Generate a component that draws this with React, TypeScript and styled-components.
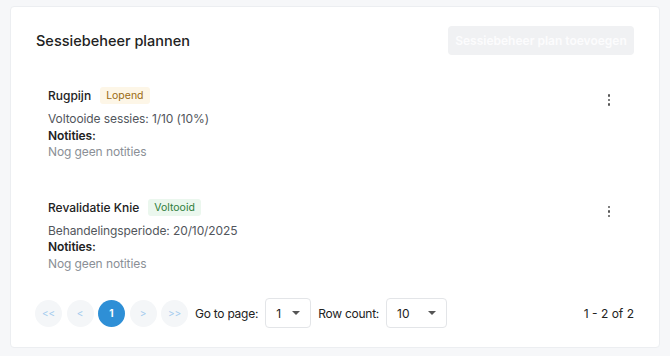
import styled, { createGlobalStyle } from "styled-components"

const GlobalStyle = createGlobalStyle`
  html, body {
    margin: 0;
    padding: 0;
    background: #f6f7f9;
    font-family: "Inter", "Noto Sans", sans-serif;
    color: #2b2b2b;
  }
`

type Plan = {
  title: string
  status: "Lopend" | "Voltooid"
  detail: string
}

const plans: Plan[] = [
  { title: "Rugpijn", status: "Lopend", detail: "Voltooide sessies: 1/10 (10%)" },
  { title: "Revalidatie Knie", status: "Voltooid", detail: "Behandelingsperiode: 20/10/2025" },
]

const Page = styled.div`
  padding: 6px 10px 8px 10px;
`

const Card = styled.div`
  background: #fff;
  border: 1px solid #eceef1;
  border-radius: 4px;
  padding: 18px 25px 20px 25px;
  height: 342px;
  box-sizing: border-box;
`

const Header = styled.div`
  display: flex;
  align-items: center;
  justify-content: space-between;
`

const Title = styled.h2`
  margin: 0;
  font-size: 14.5px;
  font-weight: 500;
  color: #222;
`

const AddButton = styled.button`
  width: 186px;
  height: 29px;
  margin-top: 1px;
  border: none;
  border-radius: 4px;
  background: #f0f1f3;
  color: #fcfcfd;
  font-family: "Inter", sans-serif;
  font-size: 12px;
  font-weight: 600;
`

const List = styled.div`
  display: flex;
  flex-direction: column;
  gap: 38px;
  margin-top: 32px;
  padding: 0 0 0 12px;
`

const Item = styled.div`
  display: flex;
  justify-content: space-between;
  align-items: flex-start;
`

const ItemBody = styled.div`
  display: flex;
  flex-direction: column;
`

const ItemHead = styled.div`
  display: flex;
  align-items: center;
  gap: 9px;
  margin-bottom: 7px;
`

const ItemTitle = styled.span`
  font-size: 12px;
  font-weight: 500;
  color: #222;
`

const Badge = styled.span<{ $tone: "warn" | "ok" }>`
  font-size: 10.5px;
  padding: 2px 6px;
  border-radius: 3px;
  background: ${(p) => (p.$tone === "warn" ? "#fdf6e7" : "#ebf7ee")};
  color: ${(p) => (p.$tone === "warn" ? "#9a6a12" : "#2e7d3a")};
`

const Line = styled.div<{ $kind?: "label" | "muted" }>`
  font-size: 12px;
  line-height: 16.5px;
  letter-spacing: -0.1px;
  color: ${(p) => (p.$kind === "label" ? "#222" : p.$kind === "muted" ? "#8a8f96" : "#52565c")};
  font-weight: ${(p) => (p.$kind === "label" ? 600 : 400)};
`

const Kebab = styled.div`
  display: flex;
  flex-direction: column;
  gap: 2px;
  margin: 7px 24px 0 0;
  span {
    width: 2.5px;
    height: 2.5px;
    border-radius: 50%;
    background: #555;
  }
`

const Pager = styled.div`
  display: flex;
  align-items: center;
  margin-top: 26px;
  margin-left: -1px;
  gap: 7px;
`

const PageNav = styled.div`
  display: flex;
  gap: 4.5px;
`

const PageButton = styled.button<{ $active?: boolean }>`
  width: 27px;
  height: 27px;
  border-radius: 50%;
  border: none;
  padding: 0;
  font-family: "Inter", sans-serif;
  font-size: 10px;
  font-weight: ${(p) => (p.$active ? 700 : 400)};
  background: ${(p) => (p.$active ? "#2e8fd6" : "#f4f6f8")};
  color: ${(p) => (p.$active ? "#fff" : "#a3cbee")};
`

const PagerLabel = styled.span`
  font-size: 12px;
  letter-spacing: -0.25px;
  color: #222;
`

const Select = styled.div<{ $w: number }>`
  width: ${(p) => p.$w}px;
  height: 30px;
  box-sizing: border-box;
  border: 1px solid #e3e5e8;
  border-radius: 4px;
  display: flex;
  align-items: center;
  justify-content: space-between;
  padding: 0 10px 0 10px;
  font-size: 12px;
  color: #222;
  &::after {
    content: "";
    border-left: 4px solid transparent;
    border-right: 4px solid transparent;
    border-top: 4px solid #555;
  }
`

const Range = styled.span`
  margin-left: auto;
  font-size: 12px;
  color: #222;
`

export default function App() {
  return (
    <Page>
      <GlobalStyle />
      <Card>
        <Header>
          <Title>Sessiebeheer plannen</Title>
          <AddButton>Sessiebeheer plan toevoegen</AddButton>
        </Header>
        <List>
          {plans.map((plan) => (
            <Item key={plan.title}>
              <ItemBody>
                <ItemHead>
                  <ItemTitle>{plan.title}</ItemTitle>
                  <Badge $tone={plan.status === "Lopend" ? "warn" : "ok"}>{plan.status}</Badge>
                </ItemHead>
                <Line>{plan.detail}</Line>
                <Line $kind="label">Notities:</Line>
                <Line $kind="muted">Nog geen notities</Line>
              </ItemBody>
              <Kebab>
                <span />
                <span />
                <span />
              </Kebab>
            </Item>
          ))}
        </List>
        <Pager>
          <PageNav>
            <PageButton>&lt;&lt;</PageButton>
            <PageButton>&lt;</PageButton>
            <PageButton $active>1</PageButton>
            <PageButton>&gt;</PageButton>
            <PageButton>&gt;&gt;</PageButton>
          </PageNav>
          <PagerLabel>Go to page:</PagerLabel>
          <Select $w={46}>1</Select>
          <PagerLabel>Row count:</PagerLabel>
          <Select $w={61}>10</Select>
          <Range>1 - 2 of 2</Range>
        </Pager>
      </Card>
    </Page>
  )
}
